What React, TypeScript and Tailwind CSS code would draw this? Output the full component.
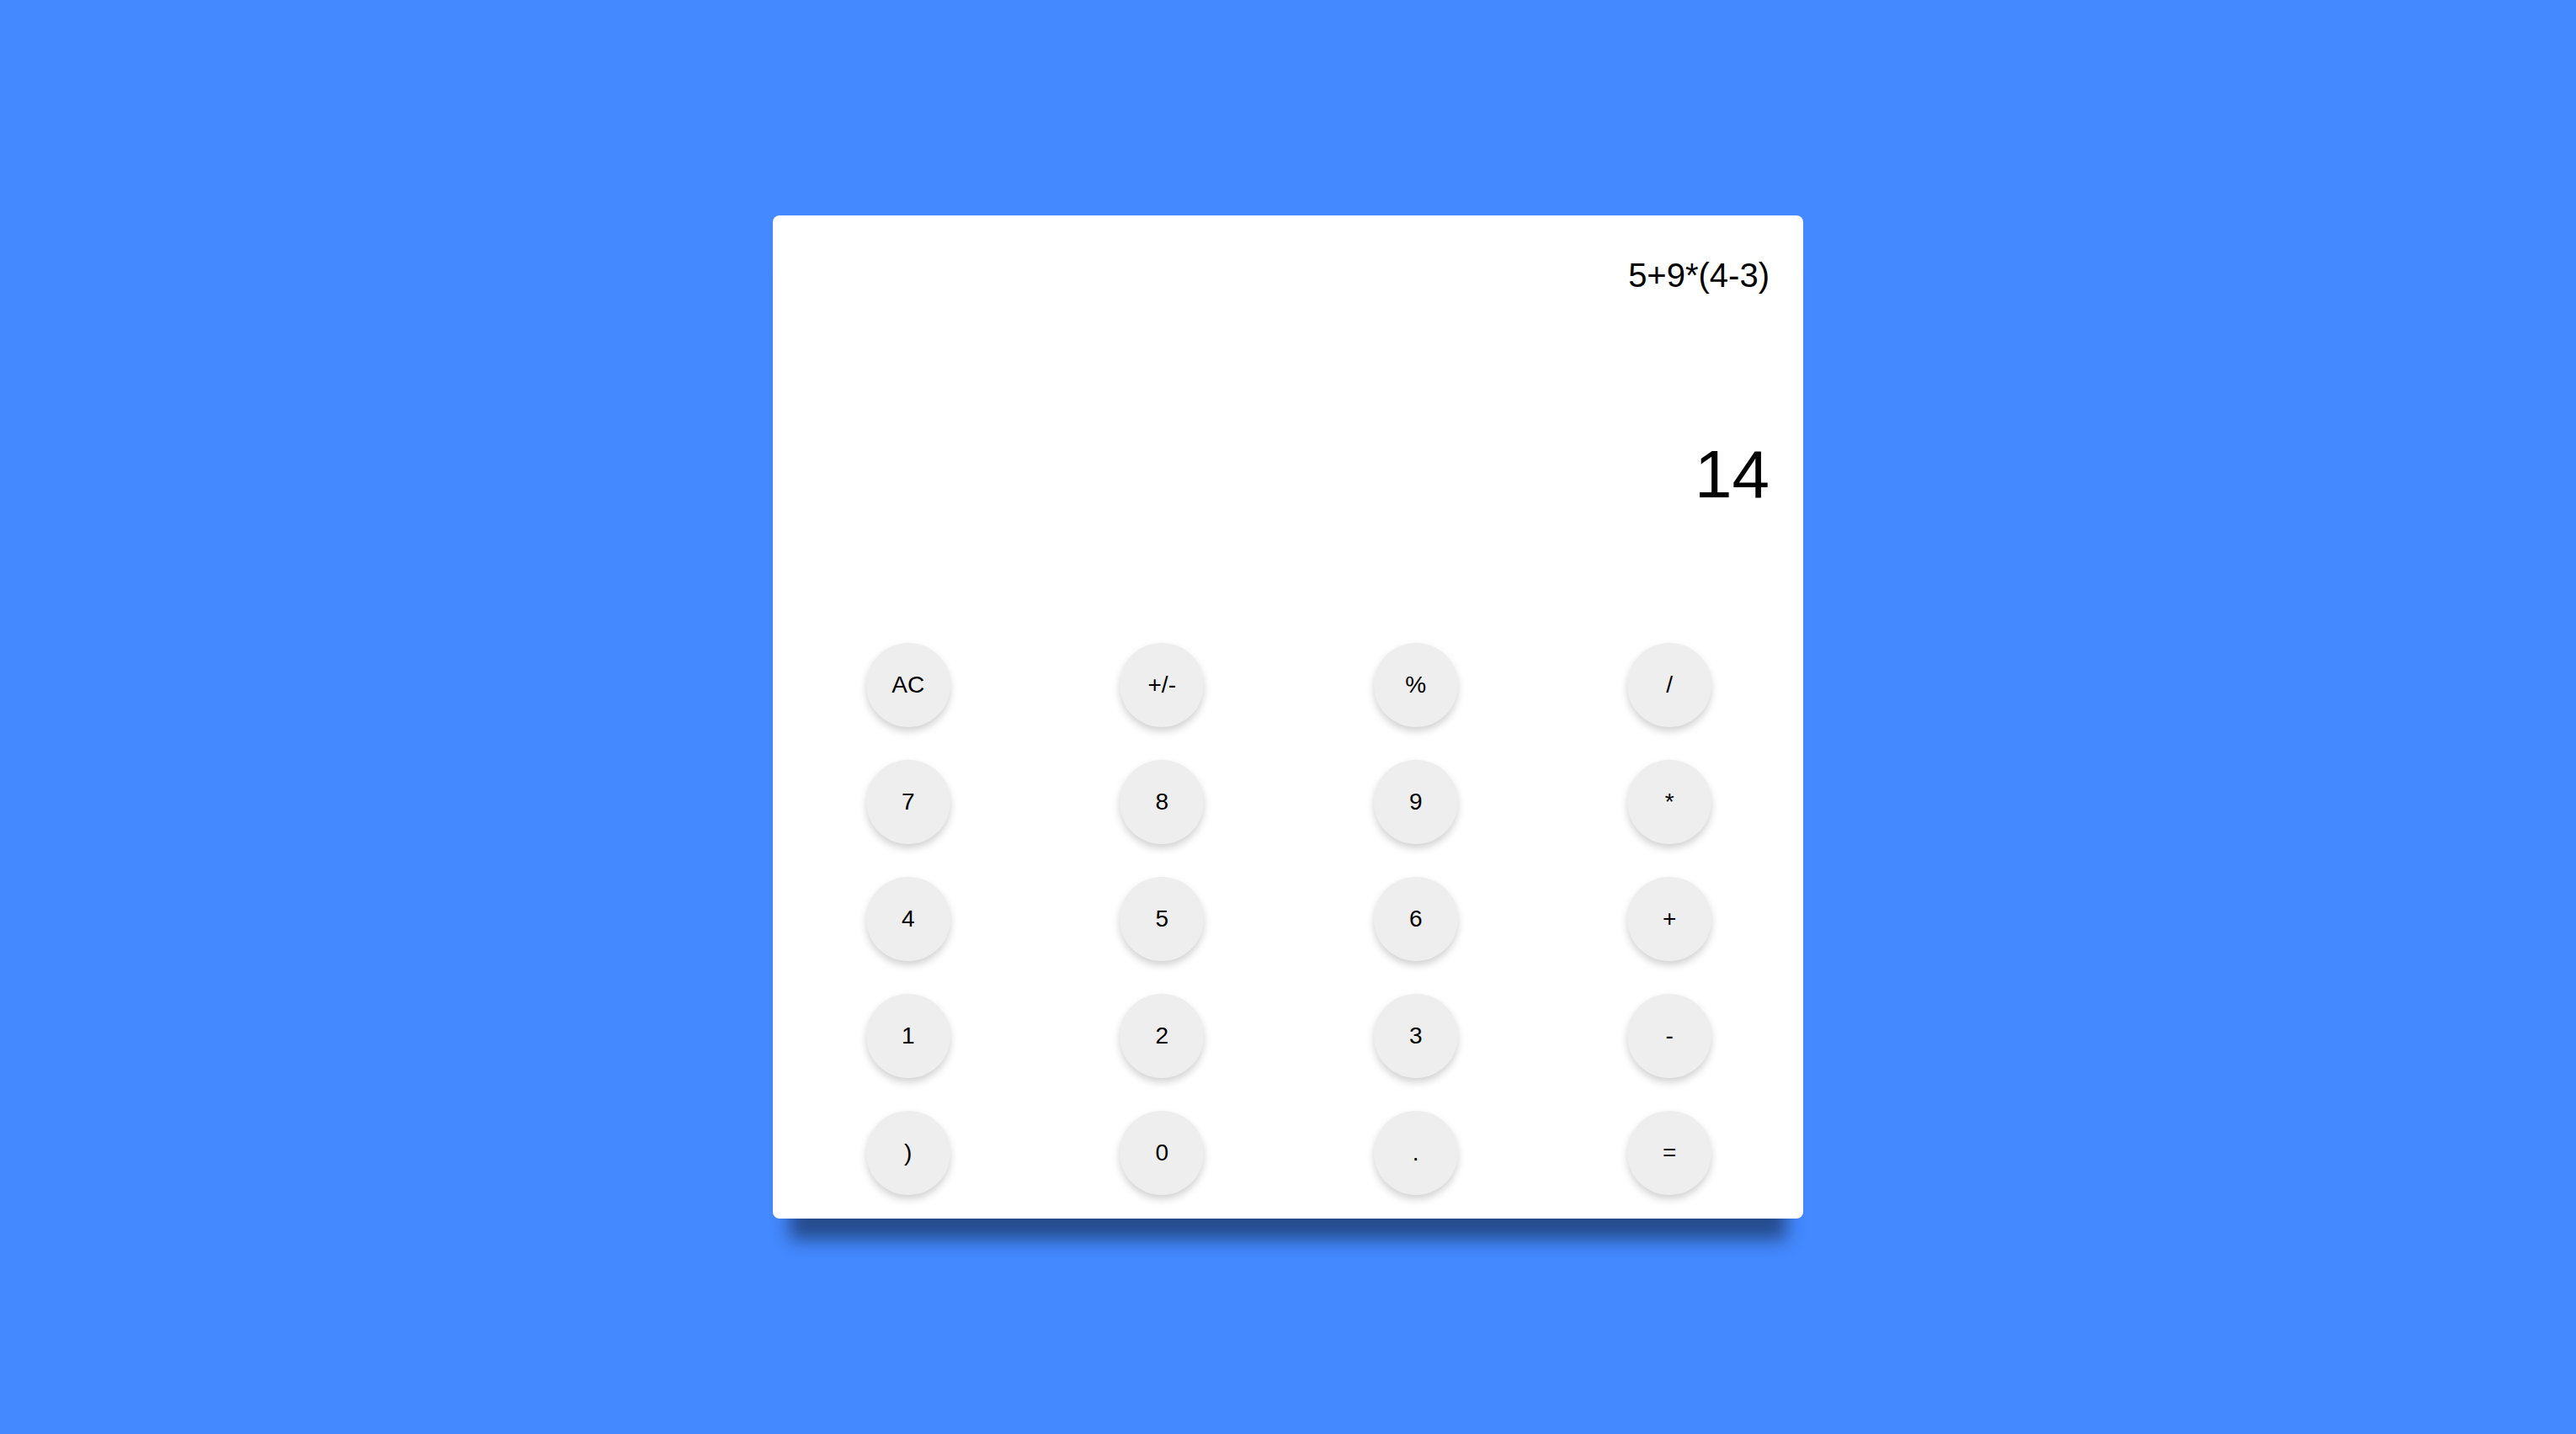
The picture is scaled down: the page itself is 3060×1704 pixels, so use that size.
const keys = [
  "AC", "+/-", "%", "/",
  "7", "8", "9", "*",
  "4", "5", "6", "+",
  "1", "2", "3", "-",
  ")", "0", ".", "=",
];

export default function App() {
  return (
    <div className="min-h-screen w-full bg-[#4489ff] flex items-center justify-center font-['Liberation_Sans',Arial,sans-serif] text-black">
      {/* Calculator card */}
      <div className="w-[1224px] bg-white rounded-[8px] shadow-[0_45px_20px_-20px_rgba(0,0,0,0.45)] flex flex-col">
        {/* Display */}
        <div className="pt-[48px] pr-[40px] text-right">
          <div className="text-[40px] leading-[46px]">5+9*(4-3)</div>
          <div className="mt-[169px] text-[80px] leading-[90px]">14</div>
        </div>

        {/* Keypad */}
        <div className="mt-[155px] grid grid-cols-4 gap-y-[39px] pl-[10px] pr-[8px] pb-[28px]">
          {keys.map((k) => (
            <div key={k} className="flex justify-center">
              <button className="w-[100px] h-[100px] rounded-full bg-[#eeeeee] text-[28px] shadow-[0_5px_10px_rgba(0,0,0,0.18)] flex items-center justify-center">
                {k}
              </button>
            </div>
          ))}
        </div>
      </div>
    </div>
  );
}
